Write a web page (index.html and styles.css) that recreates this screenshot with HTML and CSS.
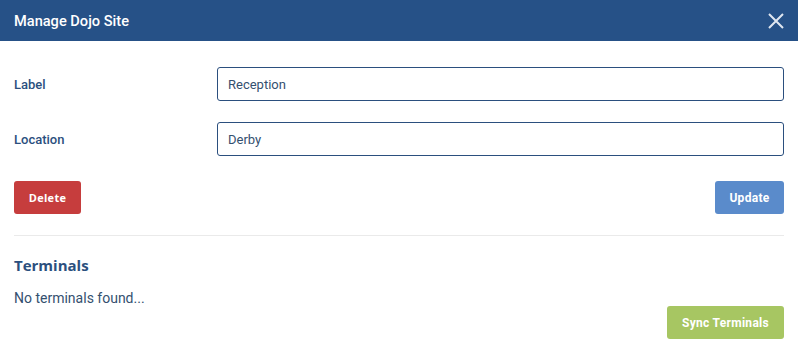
FILE: index.html
```html
<!DOCTYPE html>
<html lang="en">
<head>
    <meta charset="UTF-8">
    <title>Manage Dojo Site</title>
    <link rel="stylesheet" href="styles.css">
</head>
<body>
    <div class="modal">
        <div class="modal-header">
            <h1 class="modal-title">Manage Dojo Site</h1>
            <span class="close">
                <svg width="16" height="16" viewBox="0 0 16 16">
                    <path d="M1 1L15 15M15 1L1 15" stroke="#dfe6f0" stroke-width="2" fill="none"/>
                </svg>
            </span>
        </div>
        <div class="modal-body">
            <div class="form-row">
                <label class="form-label">Label</label>
                <input class="form-input" type="text" value="Reception">
            </div>
            <div class="form-row">
                <label class="form-label">Location</label>
                <input class="form-input" type="text" value="Derby">
            </div>
            <div class="actions">
                <button class="btn btn-delete">Delete</button>
                <button class="btn btn-update">Update</button>
            </div>
            <hr class="divider">
            <h2 class="section-title">Terminals</h2>
            <p class="empty">No terminals found...</p>
            <div class="actions actions-end">
                <button class="btn btn-sync">Sync Terminals</button>
            </div>
        </div>
    </div>
</body>
</html>
```

FILE: styles.css
```css
*{
    margin: 0;
    padding: 0;
    box-sizing: border-box;
}
body{
    font-family: Roboto, "Liberation Sans", sans-serif;
    background: #ffffff;
    color: #2b4f7e;
}
.modal{
    width: 798px;
}
.modal-header{
    height: 41px;
    background: #265187;
    display: flex;
    align-items: center;
    justify-content: space-between;
    padding: 0 14px;
}
.modal-title{
    font-size: 14.6px;
    font-weight: 500;
    color: #ffffff;
}
.close{
    display: flex;
    cursor: pointer;
}
.modal-body{
    padding: 26px 14px 0 14px;
}
.form-row{
    display: flex;
    align-items: center;
    margin-bottom: 21px;
}
.form-label{
    width: 203px;
    font-size: 13px;
    font-weight: 500;
    color: #2b4f7e;
}
.form-input{
    flex: 1;
    height: 34px;
    border: 1px solid #2b4f7e;
    border-radius: 3px;
    padding: 0 10px;
    font-family: Roboto, "Liberation Sans", sans-serif;
    font-size: 13px;
    color: #34506f;
    outline: none;
}
.actions{
    display: flex;
    justify-content: space-between;
    margin-top: 25px;
}
.actions-end{
    justify-content: flex-end;
    margin-top: 0;
}
.btn{
    height: 33px;
    border: none;
    border-radius: 3px;
    color: #ffffff;
    font-family: Roboto, "Liberation Sans", sans-serif;
    font-size: 12px;
    font-weight: 700;
    letter-spacing: 0.3px;
    padding: 0;
    cursor: pointer;
}
.btn-delete{
    background: #c63d3d;
    font-family: "Open Sans", sans-serif;
    font-size: 11px;
    width: 67px;
}
.btn-update{
    background: #5a8bcb;
    width: 69px;
}
.btn-sync{
    background: #a7c662;
    width: 117px;
}
.divider{
    border: none;
    border-top: 1px solid #eaeaea;
    margin-top: 21px;
}
.section-title{
    font-family: "Open Sans", sans-serif;
    font-size: 15px;
    font-weight: 700;
    color: #2b4f7e;
    margin-top: 19px;
}
.empty{
    font-size: 14px;
    color: #34506f;
    margin-top: 15px;
}
```
